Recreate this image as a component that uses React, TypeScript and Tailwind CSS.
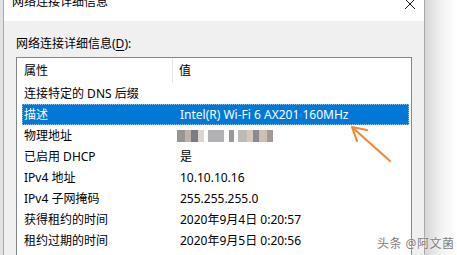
import React from "react";

const rows = [
  { k: "连接特定的 DNS 后缀", v: "" },
  { k: "描述", v: "Intel(R) Wi-Fi 6 AX201 160MHz", selected: true },
  { k: "物理地址", v: "", mac: true },
  { k: "已启用 DHCP", v: "是" },
  { k: "IPv4 地址", v: "10.10.10.16" },
  { k: "IPv4 子网掩码", v: "255.255.255.0" },
  { k: "获得租约的时间", v: "2020年9月4日 0:20:57" },
  { k: "租约过期的时间", v: "2020年9月5日 0:20:56" },
];

// pixelated blur blocks standing in for the hidden MAC address
const macBlocks = [
  { w: 8, c: "#8f8a88" },
  { w: 6, c: "#b9aaa6" },
  { w: 7, c: "#6f6d72" },
  { w: 6, c: "#d9d2cf" },
  { w: 4, c: "#ffffff" },
  { w: 16, c: "#a9a8ab" },
  { w: 5, c: "#ffffff" },
  { w: 5, c: "#8e8c90" },
  { w: 4, c: "#ffffff" },
  { w: 9, c: "#b8b4b0" },
  { w: 6, c: "#d2c2b5" },
  { w: 6, c: "#7e7c84" },
  { w: 8, c: "#c9b9ae" },
  { w: 6, c: "#9b8f8c" },
];

const font = { fontFamily: '"Noto Sans", "Noto Sans CJK SC", sans-serif' };

export default function App() {
  return (
    <div
      className="relative flex w-[457px] h-[255px] overflow-hidden bg-white text-[12px] text-black"
      style={font}
    >
      <div className="w-[3px] bg-[#e2e2e2]" />
      <div className="flex flex-col w-[422px] border-x border-[#a9a9a9]">
        <div className="relative h-[21px] shrink-0 overflow-hidden bg-white">
          <div className="-mt-[6px] pl-[8px] leading-[16px] text-[12px]">网络连接详细信息</div>
          <svg className="absolute left-[400px] top-0" width="12" height="10" viewBox="0 0 12 10">
            <path d="M1 -1 L11 9 M11 -1 L1 9" stroke="#111" strokeWidth="1" fill="none" />
          </svg>
        </div>
        <div className="flex-1 bg-[#f0f0f0] pl-[12px] pt-[15px]">
          <div className="h-[20px] leading-[16px]">
            网络连接详细信息(<span className="underline underline-offset-2">D</span>):
          </div>
          <div className="mt-[1px] w-[396px] h-[220px] border border-[#828790] bg-white">
            <div className="flex h-[25px] items-center">
              <div className="w-[156px] pl-[7px] border-r border-[#e5e5e5] h-full flex items-center">属性</div>
              <div className="pl-[6px]">值</div>
            </div>
            {rows.map((r, i) => (
              <div
                key={i}
                className={
                  r.selected
                    ? "flex h-[21px] items-center ml-[5px] mr-[2px] bg-[#0078d7] text-white outline-1 outline-dotted outline-[#8fc4f0] -outline-offset-1"
                    : "flex h-[21px] items-center ml-[5px] mr-[2px]"
                }
              >
                <div className="w-[151px] pl-[2px] whitespace-nowrap">{r.k}</div>
                <div className="pl-[7px] whitespace-nowrap">
                  {r.mac ? (
                    <div className="flex h-[12px] ml-[-3px] blur-[0.6px] opacity-90">
                      {macBlocks.map((b, j) => (
                        <span key={j} className="h-full" style={{ width: b.w, background: b.c }} />
                      ))}
                    </div>
                  ) : (
                    r.v
                  )}
                </div>
              </div>
            ))}
          </div>
        </div>
      </div>
      <div className="flex-1 bg-gradient-to-r from-[#d6d6d6] via-[#f2f2f2] to-white" />

      <svg className="absolute left-0 top-0 pointer-events-none" width="457" height="255">
        <g stroke="#f0893b" strokeWidth="2.2" fill="none" strokeLinecap="round" strokeLinejoin="round">
          <path d="M390 161 L353 128" />
          <path d="M367 130 L352 127 L357 141" />
        </g>
      </svg>

      <div className="absolute left-[377px] top-[235px] text-[12px] text-[#7d7d7d] tracking-[0.5px] [text-shadow:0_0_2px_#ffffff]">
        头条 @阿文菌
      </div>
    </div>
  );
}
